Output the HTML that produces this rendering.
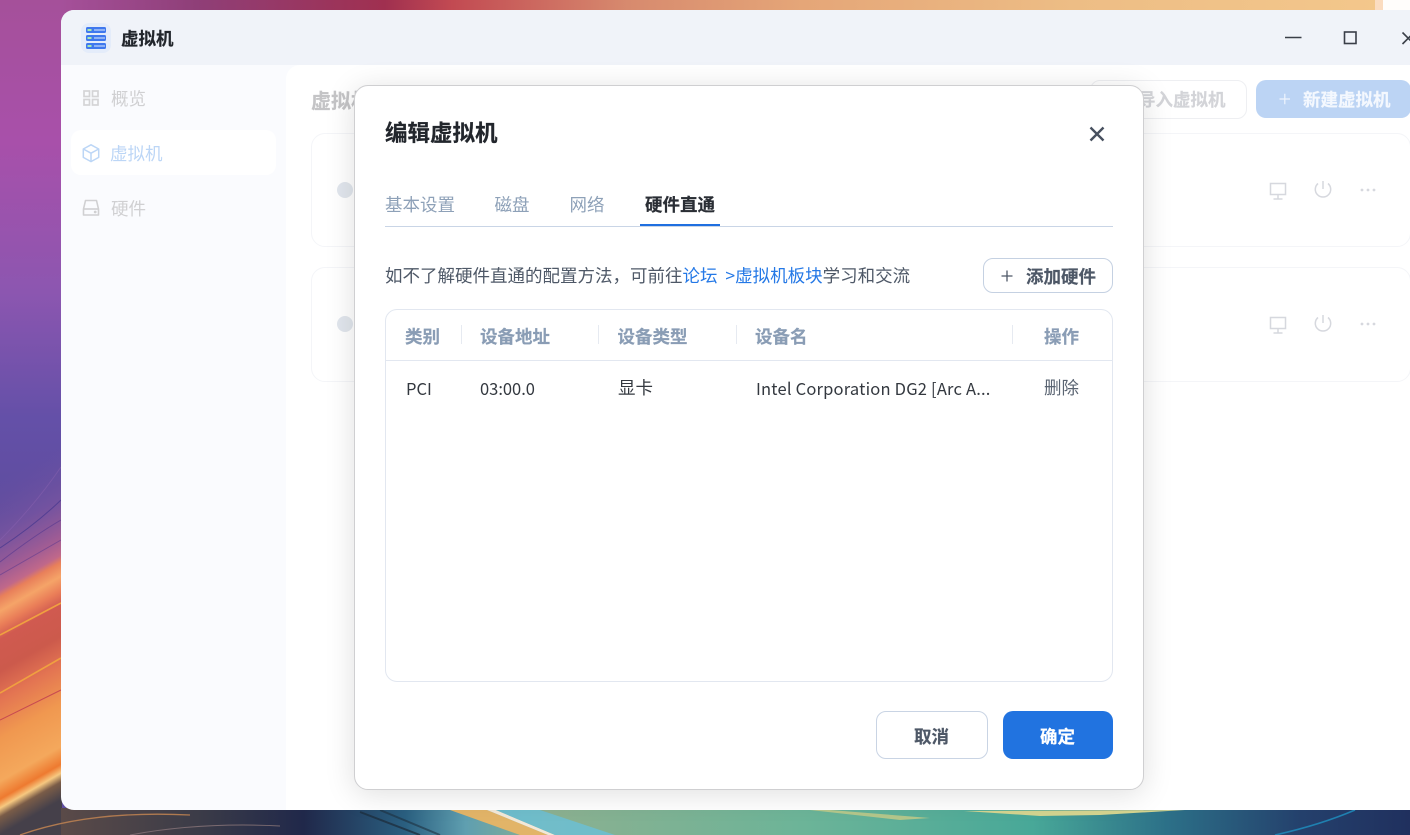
<!DOCTYPE html>
<html><head><meta charset="utf-8"><style>
html,body{margin:0;padding:0;width:1410px;height:835px;overflow:hidden;background:#fff}
body{position:relative;font-family:"Noto Sans CJK SC","Liberation Sans",sans-serif;font-size:17.5px;color:#2f343c}
.a{position:absolute;white-space:nowrap}
.t{position:absolute;white-space:nowrap;line-height:24px;height:24px}
.b{font-weight:700;-webkit-text-stroke:.2px currentColor}
</style></head><body>
<!-- wallpaper -->
<svg class="a" style="left:0;top:0" width="1410" height="835" viewBox="0 0 1410 835">
<defs>
<linearGradient id="top" x1="0" x2="1" y1="0" y2="0">
<stop offset="0" stop-color="#a5509a"/><stop offset=".1" stop-color="#8f3f78"/><stop offset=".24" stop-color="#a03050"/><stop offset=".29" stop-color="#c24a52"/><stop offset=".42" stop-color="#d78a6e"/><stop offset=".55" stop-color="#e5a678"/><stop offset=".75" stop-color="#edbd85"/><stop offset="1" stop-color="#f4c88c"/>
</linearGradient>
<linearGradient id="left" x1="0" x2="0" y1="0" y2="1">
<stop offset="0" stop-color="#a5509a"/><stop offset=".17" stop-color="#a850aa"/><stop offset=".35" stop-color="#8c56b0"/><stop offset=".5" stop-color="#6450a8"/><stop offset=".62" stop-color="#5e4c9e"/><stop offset="1" stop-color="#5e4c9e"/>
</linearGradient>
<linearGradient id="low" gradientUnits="userSpaceOnUse" x1="0" y1="480" x2="153" y2="747">
<stop offset="0" stop-color="#6a50a0" stop-opacity="0"/>
<stop offset=".15" stop-color="#7a55a0" stop-opacity=".7"/>
<stop offset=".26" stop-color="#a05c94"/>
<stop offset=".31" stop-color="#c0688a"/>
<stop offset=".33" stop-color="#e87f5a"/>
<stop offset=".37" stop-color="#f5a468"/>
<stop offset=".41" stop-color="#ea7e58"/>
<stop offset=".45" stop-color="#d05a50"/>
<stop offset=".54" stop-color="#cc5a4c"/>
<stop offset=".62" stop-color="#e37452"/>
<stop offset=".73" stop-color="#f09850"/>
<stop offset=".85" stop-color="#f4a85c"/>
<stop offset=".9" stop-color="#ee7a30"/>
<stop offset=".925" stop-color="#f6c880"/>
<stop offset=".95" stop-color="#7a5c48"/>
<stop offset="1" stop-color="#45404a"/>
</linearGradient>
<linearGradient id="bot" x1="0" x2="1" y1="0" y2="0">
<stop offset="0" stop-color="#5a4a48"/><stop offset=".1" stop-color="#3c3c48"/><stop offset=".18" stop-color="#20284a"/><stop offset=".255" stop-color="#2a5f80"/><stop offset=".3" stop-color="#5f9fb0"/><stop offset=".36" stop-color="#8cb090"/><stop offset=".55" stop-color="#6cb498"/><stop offset=".72" stop-color="#48a898"/><stop offset=".82" stop-color="#2c7088"/><stop offset=".92" stop-color="#24406c"/><stop offset="1" stop-color="#20305e"/>
</linearGradient>
</defs>
<rect width="1410" height="835" fill="url(#left)"/>
<rect x="0" y="440" width="62" height="395" fill="url(#low)"/>
<rect x="61" y="0" width="1349" height="12" fill="url(#top)"/>
<rect x="61" y="808" width="1349" height="27" fill="url(#bot)"/>
<g fill="none" stroke-width="1">
<path d="M0 540 Q35 505 61 467" stroke="#8a62b0" opacity=".5"/>
<path d="M0 548 Q35 525 61 500" stroke="#4a3a90" opacity=".8"/>
<path d="M0 562 Q35 535 61 520" stroke="#5a3a90" opacity=".7"/>
<path d="M0 575 Q35 555 61 540" stroke="#6a4090" opacity=".7"/>
</g>
<g fill="none">
<path d="M0 635 L61 603" stroke="#f0a040" stroke-width="1.6"/>
<path d="M0 693 L61 658" stroke="#f0a040" stroke-width="1.6"/>
<path d="M0 720 L61 690" stroke="#c84a50" stroke-width="1"/>
<path d="M20 835 Q90 810 190 815" stroke="#b07a50" stroke-width="1.3"/>
<path d="M130 835 Q200 822 280 826" stroke="#7a6a70" stroke-width="1"/>
<path d="M360 812 L420 835" stroke="#1e3040" stroke-width="2" opacity=".8"/>
<path d="M380 810 L440 835" stroke="#1e3040" stroke-width="2" opacity=".6"/>
</g>
<polygon points="450,810 487,810 548,835 520,835" fill="#e2b468"/>
<polygon points="487,810 496,810 555,835 548,835" fill="#f2e8d8"/>
<polygon points="496,810 540,810 615,835 555,835" fill="#6cc0d4" opacity=".85"/>
<polygon points="810,810 830,810 930,818 900,820" fill="#c8cc88" opacity=".8"/>
<polygon points="964,811 1185,810 1100,815 1040,816" fill="#d4d490"/>
<path d="M1275 835 Q1320 825 1355 810" stroke="#1f80b0" stroke-width="1.6" fill="none"/>
<rect x="1375" y="0" width="8" height="11" fill="#fbdcc0"/>
<rect x="1383" y="0" width="27" height="10" fill="#fffdfb"/>
</svg>

<!-- window -->
<div class="a" style="left:61px;top:10px;width:1349px;height:800px;background:#fafbfe;border-radius:13px 0 0 13px;overflow:hidden">
  <div class="a" style="left:0;top:0;width:1349px;height:55px;background:#f0f3f9"></div>
  <div class="a" style="left:225px;top:55px;width:1124px;height:745px;background:#fff;border-radius:14px 0 0 0"></div>
</div>

<!-- logo -->
<div class="a" style="left:81px;top:23px;width:30px;height:30px;background:#e4ecfa;border-radius:8px"></div>
<svg class="a" style="left:81px;top:23px" width="30" height="30" viewBox="0 0 30 30">
<g fill="#3f78ee"><rect x="5" y="4" width="20" height="6" rx="1.5"/><rect x="5" y="12" width="20" height="6" rx="1.5"/><rect x="5" y="20" width="20" height="6" rx="1.5"/></g>
<g fill="#8fb2f5"><rect x="13" y="6" width="11" height="2"/><rect x="13" y="14" width="11" height="2"/><rect x="13" y="22" width="11" height="2"/></g>
<g fill="#a8e8b0"><rect x="6.5" y="6" width="4" height="2"/><rect x="6.5" y="14" width="4" height="2"/><rect x="6.5" y="22" width="4" height="2"/></g>
</svg>
<div class="t b" style="left:121px;top:27px;font-size:17.5px;color:#22262c">虚拟机</div>

<!-- window controls -->
<svg class="a" style="left:1280px;top:25px" width="130" height="26" viewBox="0 0 130 26">
<path d="M5 12.5H21.5" stroke="#3a3f48" stroke-width="1.6" fill="none"/>
<rect x="64.5" y="7" width="11.5" height="11.5" stroke="#3a3f48" stroke-width="1.6" fill="none"/>
<path d="M122.5 7.5L134 19M134 7.5L122.5 19" stroke="#3a3f48" stroke-width="1.6" fill="none"/>
</svg>

<!-- sidebar -->
<div class="a" style="left:71px;top:130px;width:205px;height:45px;background:#fff;border-radius:10px"></div>
<svg class="a" style="left:81px;top:88px" width="20" height="20" viewBox="0 0 20 20" fill="none" stroke="#d4d4d6" stroke-width="1.7">
<rect x="3" y="3" width="5.5" height="5.5"/><rect x="11.5" y="3" width="5.5" height="5.5"/><rect x="3" y="11.5" width="5.5" height="5.5"/><rect x="11.5" y="11.5" width="5.5" height="5.5"/>
</svg>
<div class="t" style="left:111px;top:87px;color:#d0d0d2">概览</div>
<svg class="a" style="left:81px;top:143px" width="20" height="20" viewBox="0 0 20 20" fill="none" stroke="#bcd6f6" stroke-width="1.5" stroke-linejoin="round">
<path d="M10 1.8L17.7 6V14.4L10 18.6L2.3 14.4V6Z"/><path d="M2.3 6L10 10.2L17.7 6M10 10.2V18.6"/>
</svg>
<div class="t" style="left:110px;top:142px;color:#bcd6f6">虚拟机</div>
<svg class="a" style="left:81px;top:198px" width="20" height="20" viewBox="0 0 20 20" fill="none" stroke="#d0d0d2" stroke-width="1.6" stroke-linejoin="round">
<path d="M2.5 11L4.5 2.5H15.5L17.5 11V17H2.5Z"/><path d="M2.5 11H17.5"/><circle cx="14.2" cy="14" r=".6" fill="#d0d0d2"/>
</svg>
<div class="t" style="left:111px;top:197px;color:#d0d0d2">硬件</div>

<!-- content behind -->
<div class="t b" style="left:311px;top:88px;font-size:20px;color:#c4c4c6">虚拟机</div>
<div class="a" style="left:1090px;top:80px;width:155px;height:37px;border:1px solid #eeeff2;border-radius:10px;background:#fff"></div>
<div class="t b" style="left:1138px;top:88px;color:#d3d4d8">导入虚拟机</div>
<div class="a" style="left:1256px;top:80px;width:155px;height:38px;border-radius:10px;background:#bcd4f4"></div>
<div class="t b" style="left:1303px;top:88px;color:#f4f8fe">新建虚拟机</div>
<svg class="a" style="left:1278px;top:92px" width="14" height="14" viewBox="0 0 14 14"><path d="M1.5 7H12M6.8 1.8V12.2" stroke="#eef4fd" stroke-width="1.2"/></svg>

<div class="a" style="left:311px;top:133px;width:1098px;height:112px;border:1px solid #f4f5f8;border-radius:14px"></div>
<div class="a" style="left:311px;top:267px;width:1098px;height:113px;border:1px solid #f4f5f8;border-radius:14px"></div>
<div class="a" style="left:337px;top:182px;width:16px;height:16px;border-radius:50%;background:#e1e6ed"></div>
<div class="a" style="left:337px;top:316px;width:16px;height:16px;border-radius:50%;background:#e1e6ed"></div>

<svg class="a" style="left:1265px;top:178px" width="120" height="24" viewBox="0 0 120 24" fill="none" stroke="#d6d8de" stroke-width="1.5">
<rect x="5.5" y="5.5" width="15" height="11"/><path d="M13 17V21M8.5 21H17.5" />
<path d="M53 5.5A7.7 7.7 0 1 0 63 5.5M58 3V11"/>
<g fill="#d6d8de" stroke="none"><circle cx="97" cy="12" r="1.4"/><circle cx="103" cy="12" r="1.4"/><circle cx="109" cy="12" r="1.4"/></g>
</svg>
<svg class="a" style="left:1265px;top:312px" width="120" height="24" viewBox="0 0 120 24" fill="none" stroke="#d6d8de" stroke-width="1.5">
<rect x="5.5" y="5.5" width="15" height="11"/><path d="M13 17V21M8.5 21H17.5" />
<path d="M53 5.5A7.7 7.7 0 1 0 63 5.5M58 3V11"/>
<g fill="#d6d8de" stroke="none"><circle cx="97" cy="12" r="1.4"/><circle cx="103" cy="12" r="1.4"/><circle cx="109" cy="12" r="1.4"/></g>
</svg>

<!-- dialog -->
<div class="a" style="left:354px;top:85px;width:788px;height:703px;background:#fff;border:1px solid #cfcfd1;border-radius:14px;box-shadow:0 4px 30px rgba(0,0,0,.13)"></div>
<div class="t b" style="left:385px;top:120px;font-size:22.5px;color:#22262c">编辑虚拟机</div>
<svg class="a" style="left:1088px;top:125px" width="18" height="18" viewBox="0 0 18 18"><path d="M2.5 2.5L15.5 15.5M15.5 2.5L2.5 15.5" stroke="#47505f" stroke-width="2.4"/></svg>

<div class="t" style="left:385px;top:192.5px;color:#8ea1b8">基本设置</div>
<div class="t" style="left:494.5px;top:192.5px;color:#8ea1b8">磁盘</div>
<div class="t" style="left:569.5px;top:192.5px;color:#8ea1b8">网络</div>
<div class="t b" style="left:645px;top:192.5px;color:#2a2e35">硬件直通</div>
<div class="a" style="left:385px;top:226px;width:728px;height:1px;background:#c9d5e6"></div>
<div class="a" style="left:640px;top:224px;width:80px;height:2px;background:#1f6fe0"></div>

<div class="t" style="left:385px;top:264px;color:#4e5867">如不了解硬件直通的配置方法&#xFF0C;可前往<span style="color:#2478e6">论坛<span style="margin-left:4px">&nbsp;&gt;</span>虚拟机板块</span>学习和交流</div>
<div class="a" style="left:983px;top:258px;width:128px;height:33px;border:1px solid #c5d1e2;border-radius:10px"></div>
<svg class="a" style="left:1000px;top:269px" width="14" height="14" viewBox="0 0 14 14"><path d="M1.5 7H12.5M7 1.5V12.5" stroke="#4e5867" stroke-width="1.3"/></svg>
<div class="t b" style="left:1026px;top:265px;color:#4e5867">添加硬件</div>

<div class="a" style="left:385px;top:309px;width:726px;height:371px;border:1px solid #e2e7f0;border-radius:12px"></div>
<div class="a" style="left:386px;top:360px;width:726px;height:1px;background:#e2e7f0"></div>
<div class="a" style="left:461px;top:325px;width:1px;height:19px;background:#e6eaf1"></div>
<div class="a" style="left:598px;top:325px;width:1px;height:19px;background:#e6eaf1"></div>
<div class="a" style="left:736px;top:325px;width:1px;height:19px;background:#e6eaf1"></div>
<div class="a" style="left:1012px;top:325px;width:1px;height:19px;background:#e6eaf1"></div>
<div class="t b" style="left:405px;top:325px;color:#8a9db5">类别</div>
<div class="t b" style="left:480px;top:325px;color:#8a9db5">设备地址</div>
<div class="t b" style="left:617.5px;top:325px;color:#8a9db5">设备类型</div>
<div class="t b" style="left:755px;top:325px;color:#8a9db5">设备名</div>
<div class="t b" style="left:1044px;top:325px;color:#8a9db5">操作</div>
<div class="t" style="left:406px;top:375.5px;font-size:16.5px;color:#33383f">PCI</div>
<div class="t" style="left:480px;top:375.5px;font-size:16.5px;color:#33383f">03:00.0</div>
<div class="t" style="left:618px;top:376px;color:#33383f">显卡</div>
<div class="t" style="left:756px;top:375.5px;font-size:16.5px;letter-spacing:.2px;color:#33383f">Intel Corporation DG2 [Arc A...</div>
<div class="t" style="left:1044px;top:376px;color:#5a6472">删除</div>

<div class="a" style="left:876px;top:711px;width:110px;height:46px;border:1px solid #c9d4e4;border-radius:10px;background:#fff"></div>
<div class="t b" style="left:914px;top:725px;color:#4e5867">取消</div>
<div class="a" style="left:1003px;top:711px;width:110px;height:48px;border-radius:10px;background:#2173e0"></div>
<div class="t b" style="left:1040px;top:725px;color:#fff">确定</div>
</body></html>
